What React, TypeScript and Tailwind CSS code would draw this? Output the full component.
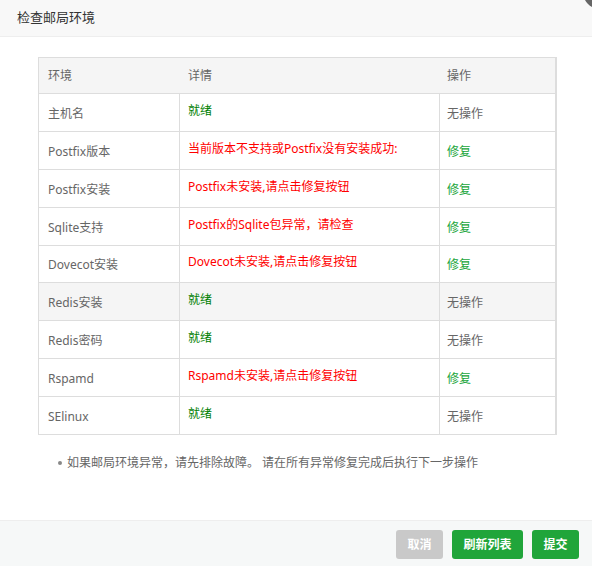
import React from "react";

type Row = { env: string; detail: string; ok: boolean; hover?: boolean };

const rows: Row[] = [
  { env: "主机名", detail: "就绪", ok: true },
  { env: "Postfix版本", detail: "当前版本不支持或Postfix没有安装成功:", ok: false },
  { env: "Postfix安装", detail: "Postfix未安装,请点击修复按钮", ok: false },
  { env: "Sqlite支持", detail: "Postfix的Sqlite包异常，请检查", ok: false },
  { env: "Dovecot安装", detail: "Dovecot未安装,请点击修复按钮", ok: false },
  { env: "Redis安装", detail: "就绪", ok: true, hover: true },
  { env: "Redis密码", detail: "就绪", ok: true },
  { env: "Rspamd", detail: "Rspamd未安装,请点击修复按钮", ok: false },
  { env: "SElinux", detail: "就绪", ok: true },
];

export default function App() {
  return (
    <div
      className="relative flex h-[566px] w-[592px] flex-col overflow-hidden bg-white text-[12px] text-[#666]"
      style={{ fontFamily: '"Noto Sans", "Noto Sans CJK SC", sans-serif' }}
    >
      <div className="absolute right-[-25px] top-[-25px] h-[34px] w-[34px] rounded-full bg-[#666]" />
      <div className="flex h-[37px] shrink-0 items-center border-b border-[#eee] bg-[#f8f8f8] pl-[17px] text-[13px] text-[#333]">
        检查邮局环境
      </div>
      <div className="pl-[38px] pt-[20px]">
        <div className="w-[519px] border-l border-r-2 border-t border-[#ddd]">
          <div className="flex h-[36px] items-center border-b border-[#ddd] bg-[#f5f5f5]">
            <div className="w-[140px] pl-[9px]">环境</div>
            <div className="w-[260px] pl-[9px]">详情</div>
            <div className="flex-1 pl-[8px]">操作</div>
          </div>
          {rows.map((r, i) => (
            <div
              key={i}
              className={`flex ${i === 4 ? "h-[37px]" : "h-[38px]"} border-b border-[#ddd] ${r.hover ? "bg-[#f5f5f5]" : "bg-white"}`}
            >
              <div className="flex w-[140px] items-center pl-[9px] pt-[2px]">{r.env}</div>
              <div
                className={`flex w-[260px] items-center border-l border-[#ddd] pb-[4px] pl-[8px] ${r.ok ? "text-[#008000]" : "text-[#ff0000]"}`}
              >
                {r.detail}
              </div>
              <div
                className={`flex flex-1 items-center border-l border-[#ddd] pl-[7px] pt-[2px] ${r.ok ? "text-[#666]" : "text-[#20a53a]"}`}
              >
                {r.ok ? "无操作" : "修复"}
              </div>
            </div>
          ))}
        </div>
        <div className="mt-[19px] flex items-center pl-[20px] text-[#666]">
          <span className="mr-[5px] inline-block h-[4px] w-[4px] rounded-full bg-[#888]" />
          <span>如果邮局环境异常，请先排除故障。 请在所有异常修复完成后执行下一步操作</span>
        </div>
      </div>
      <div className="mt-auto flex h-[46px] shrink-0 justify-end gap-[9px] border-t border-[#eee] bg-[#f6f8f8] pr-[13px] pt-[9px]">
        <button className="h-[29px] w-[47px] rounded-[3px] bg-[#c9c9c9] text-[12px] font-bold text-white">取消</button>
        <button className="h-[29px] w-[71px] rounded-[3px] bg-[#20a53a] text-[12px] font-bold text-white">刷新列表</button>
        <button className="h-[29px] w-[47px] rounded-[3px] bg-[#20a53a] text-[12px] font-bold text-white">提交</button>
      </div>
    </div>
  );
}
